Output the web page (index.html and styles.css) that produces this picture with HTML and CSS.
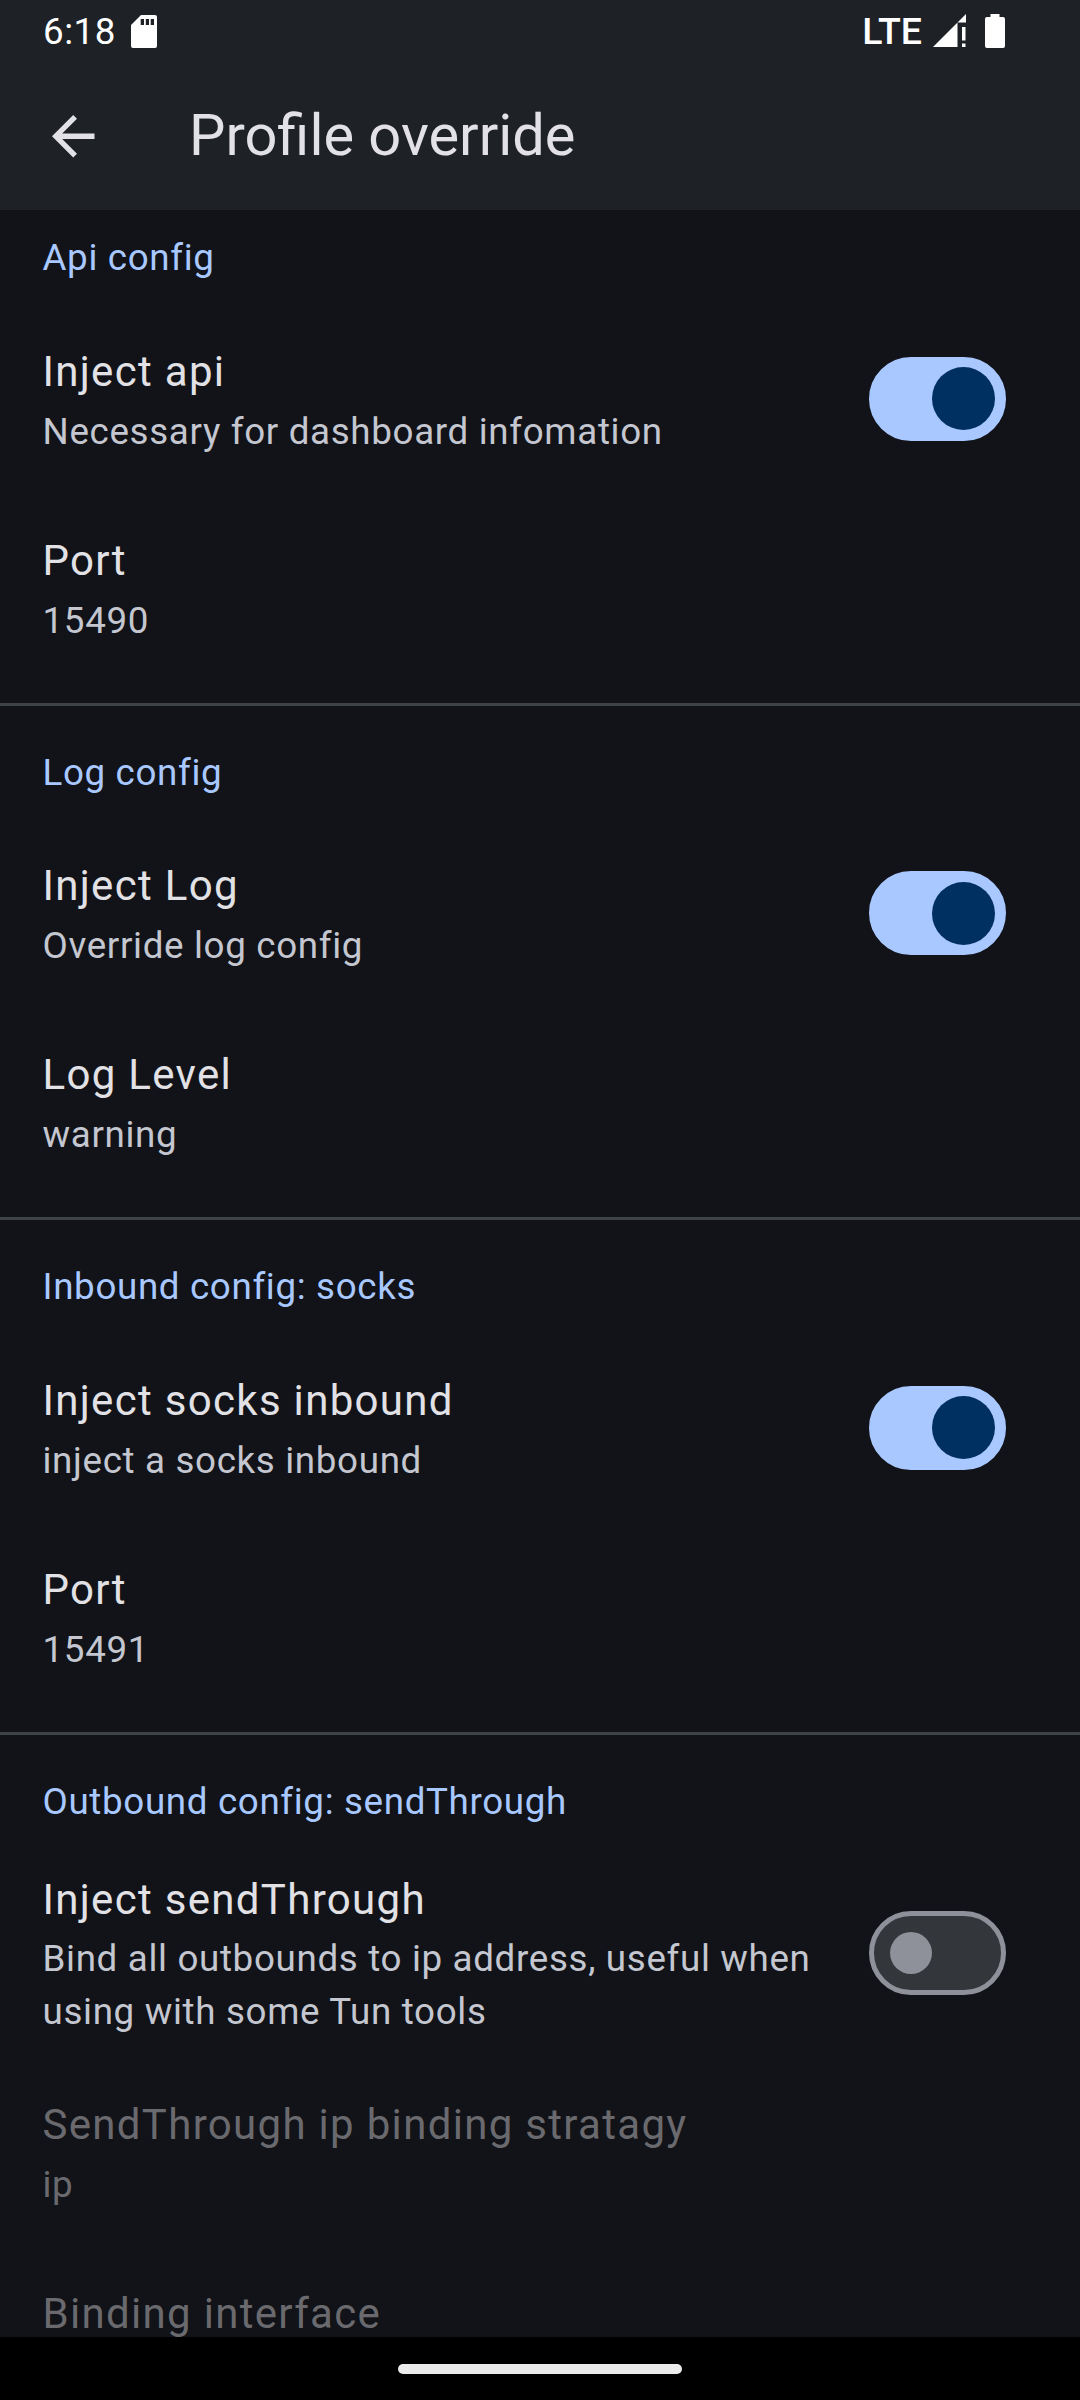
FILE: index.html
```html
<!DOCTYPE html>
<html lang="en">
<head>
<meta charset="utf-8">
<title>Profile override</title>
<link rel="stylesheet" href="styles.css">
</head>
<body>
<div class="screen">
  <header class="top">
    <div class="status">
      <span class="clock">6:18</span>
      <svg class="sd" width="26" height="33" viewBox="0 0 26 33"><path fill="#fff" fill-rule="evenodd" d="M10 0H24Q26 0 26 2V31Q26 33 24 33H2Q0 33 0 31V10ZM9.7 4V10H13V4ZM14.8 4V10H18V4ZM19.7 4V10H23V4Z"/></svg>
      <span class="lte">LTE</span>
      <svg class="signal" width="33" height="33" viewBox="0 0 33 33"><path fill="#fff" d="M0 33L33 0V8.500H24.500V33ZM29 13H32.500V26.500H29ZM29 29.500H32.500V33H29Z"/></svg>
      <svg class="battery" width="20" height="34" viewBox="0 0 20 34"><path fill="#fff" d="M5.500 0H14.500V3H18Q20 3 20 5V32Q20 34 18 34H2Q0 34 0 32V5Q0 3 2 3H5.500Z"/></svg>
    </div>
    <div class="bar">
      <svg class="back" width="43" height="43" viewBox="0 0 43 43"><path fill="#e2e2e6" d="M42.500 18.600V23.900H10.200L25 38.700L21.200 42.500L0 21.250L21.200 0L25 3.800L10.200 18.600Z"/></svg>
      <h1>Profile override</h1>
    </div>
  </header>
  <main>
    <section>
      <h2>Api config</h2>
      <div class="row"><div class="text"><h3>Inject api</h3><p>Necessary for dashboard infomation</p></div><span class="switch on"></span></div>
      <div class="row"><div class="text"><h3>Port</h3><p>15490</p></div></div>
    </section>
    <section>
      <h2>Log config</h2>
      <div class="row"><div class="text"><h3>Inject Log</h3><p>Override log config</p></div><span class="switch on"></span></div>
      <div class="row"><div class="text"><h3>Log Level</h3><p>warning</p></div></div>
    </section>
    <section>
      <h2>Inbound config: socks</h2>
      <div class="row"><div class="text"><h3>Inject socks inbound</h3><p>inject a socks inbound</p></div><span class="switch on"></span></div>
      <div class="row"><div class="text"><h3>Port</h3><p>15491</p></div></div>
    </section>
    <section>
      <h2>Outbound config: sendThrough</h2>
      <div class="row tall"><div class="text"><h3>Inject sendThrough</h3><p>Bind all outbounds to ip address, useful when<br>using with some Tun tools</p></div><span class="switch"></span></div>
      <div class="row disabled"><div class="text"><h3>SendThrough ip binding stratagy</h3><p>ip</p></div></div>
      <div class="row disabled last"><div class="text"><h3>Binding interface</h3></div></div>
    </section>
  </main>
  <footer><span class="pill"></span></footer>
</div>
</body>
</html>
```
FILE: styles.css
```css
* { box-sizing: border-box; margin: 0; padding: 0; }
body { background: #111318; font-family: Roboto, sans-serif; color: #e2e2e6; }
h1, h2, h3 { font-weight: 400; }
svg { display: block; flex: none; }
.screen { width: 1080px; height: 2400px; display: flex; flex-direction: column; overflow: hidden; }
.top { height: 210px; flex: none; background: #1e2125; }
.status { height: 63px; display: flex; align-items: flex-start; padding: 0 75px 0 43px; color: #fff; line-height: 64px; }
.clock { width: 88px; font-size: 36.75px; letter-spacing: 0.5px; }
.sd { margin-top: 15px; }
.lte { font-size: 37.5px; font-weight: 500; margin-left: auto; line-height: 62px; }
.signal { margin: 14px 0 0 11px; }
.battery { margin: 14px 0 0 19px; }
.bar { height: 147px; display: flex; align-items: flex-start; padding-left: 52px; }
.back { margin-top: 52.3px; }
.bar h1 { font-size: 57.75px; line-height: 145px; margin-left: 94px; }
main { flex: 1; min-height: 0; overflow: hidden; }
section { height: 514.6px; padding-top: 21px; border-bottom: 3px solid #3d4347; }
section:first-child { height: 495.6px; padding-top: 2px; }
section:last-child { height: auto; border: 0; }
h2 { height: 92px; line-height: 92px; padding-left: 42.5px; font-size: 36.75px; letter-spacing: 0.65px; color: #a8c8ff; }
.row { height: 189px; display: flex; align-items: center; justify-content: space-between; padding: 0 74px 0 42.5px; }
.row.tall { height: 210px; }
.row.tall h3 { line-height: 65px; }
.row.tall p { margin-top: 0; }
.row.last { height: auto; padding-top: 35px; }
h3 { font-size: 42px; line-height: 63px; letter-spacing: 1.31px; }
p { margin-top: 2px; font-size: 36.75px; line-height: 53px; letter-spacing: 0.66px; color: #c4c6d0; }
.disabled h3, .disabled p { color: #6a6a6e; }
.switch { width: 137px; height: 84px; flex: none; border: 5px solid #8e9199; border-radius: 42px; background: #33363a; display: flex; align-items: center; padding-left: 16px; }
.switch::before { content: ""; width: 42px; height: 42px; border-radius: 50%; background: #8e9199; }
.switch.on { background: #a8c8ff; border-color: #a8c8ff; padding-left: 58px; }
.switch.on::before { width: 63px; height: 63px; background: #003062; }
footer { height: 63px; flex: none; background: #000; display: flex; align-items: flex-start; justify-content: center; padding-top: 27px; }
.pill { width: 284px; height: 10px; border-radius: 5px; background: #ebebeb; }
```
